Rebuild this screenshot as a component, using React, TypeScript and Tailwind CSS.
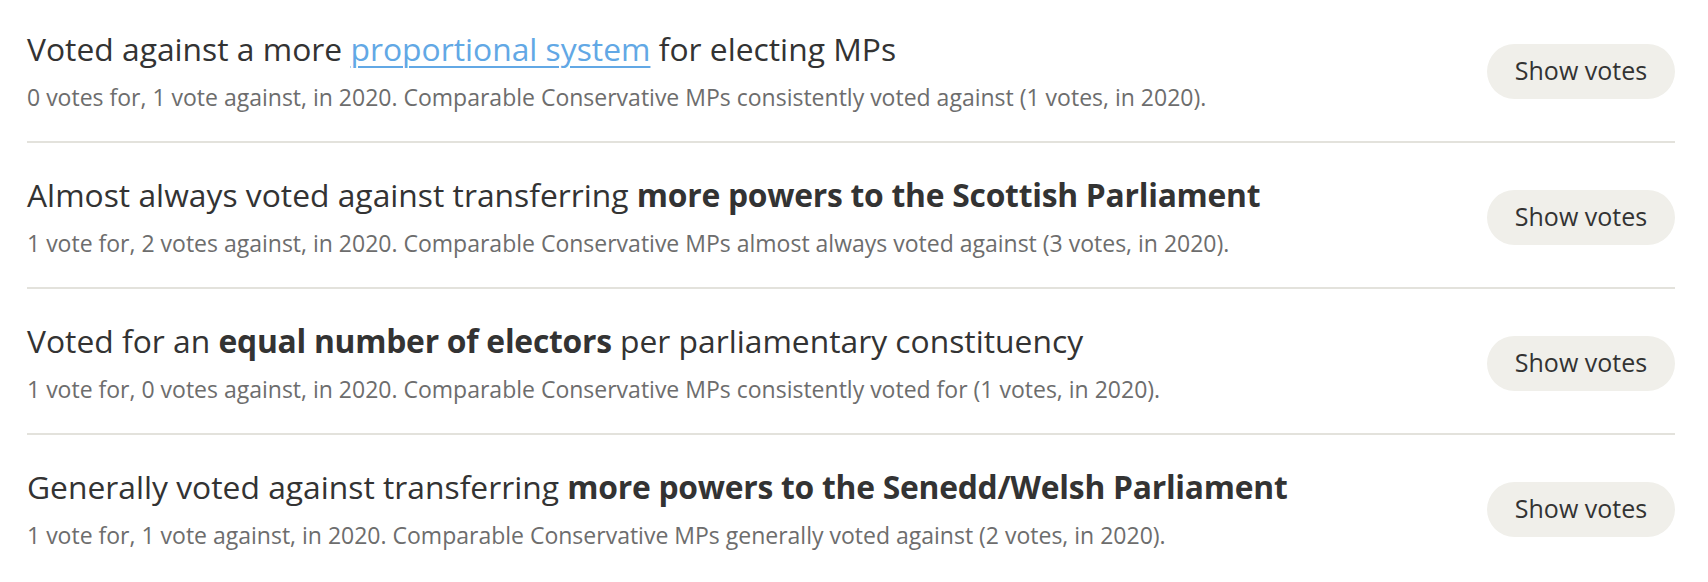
import React from 'react';

type Row = {
  title: React.ReactNode;
  detail: string;
};

const rows: Row[] = [
  {
    title: (
      <>
        Voted against a more{' '}
        <a href="#" className="text-[#62a8e5] underline decoration-[1.5px] underline-offset-[5px]">
          proportional system
        </a>{' '}
        for electing MPs
      </>
    ),
    detail:
      '0 votes for, 1 vote against, in 2020. Comparable Conservative MPs consistently voted against (1 votes, in 2020).',
  },
  {
    title: (
      <>
        Almost always voted against transferring{' '}
        <b className="font-bold tracking-[-0.25px]">more powers to the Scottish Parliament</b>
      </>
    ),
    detail:
      '1 vote for, 2 votes against, in 2020. Comparable Conservative MPs almost always voted against (3 votes, in 2020).',
  },
  {
    title: (
      <>
        Voted for an <b className="font-bold tracking-[-0.25px]">equal number of electors</b> per parliamentary
        constituency
      </>
    ),
    detail:
      '1 vote for, 0 votes against, in 2020. Comparable Conservative MPs consistently voted for (1 votes, in 2020).',
  },
  {
    title: (
      <>
        Generally voted against transferring{' '}
        <b className="font-bold tracking-[-0.25px]">more powers to the Senedd/Welsh Parliament</b>
      </>
    ),
    detail:
      '1 vote for, 1 vote against, in 2020. Comparable Conservative MPs generally voted against (2 votes, in 2020).',
  },
];

export default function App() {
  return (
    <div className="w-[1708px] h-[582px] overflow-hidden bg-white pl-[27px] pr-[33px] font-['Open_Sans',sans-serif] text-[#333]">
      {rows.map((row, i) => (
        <div
          key={i}
          className={
            'flex items-center justify-between pb-7 ' +
            (i === 0 ? 'pt-[29px] ' : 'pt-8 ') +
            (i < rows.length - 1 ? 'border-b-2 border-[#e3e2dc]' : '')
          }
        >
          <div>
            <h3 className="text-[31.8px] leading-[40px] font-normal">{row.title}</h3>
            <p className="mt-3 text-[23px] leading-[32px] text-[#6d6d6d]">{row.detail}</p>
          </div>
          {/* Votes toggle */}
          <button className="w-[188px] h-[55px] rounded-full bg-[#f0efea] text-[25px] text-[#333] shrink-0">
            Show votes
          </button>
        </div>
      ))}
    </div>
  );
}
